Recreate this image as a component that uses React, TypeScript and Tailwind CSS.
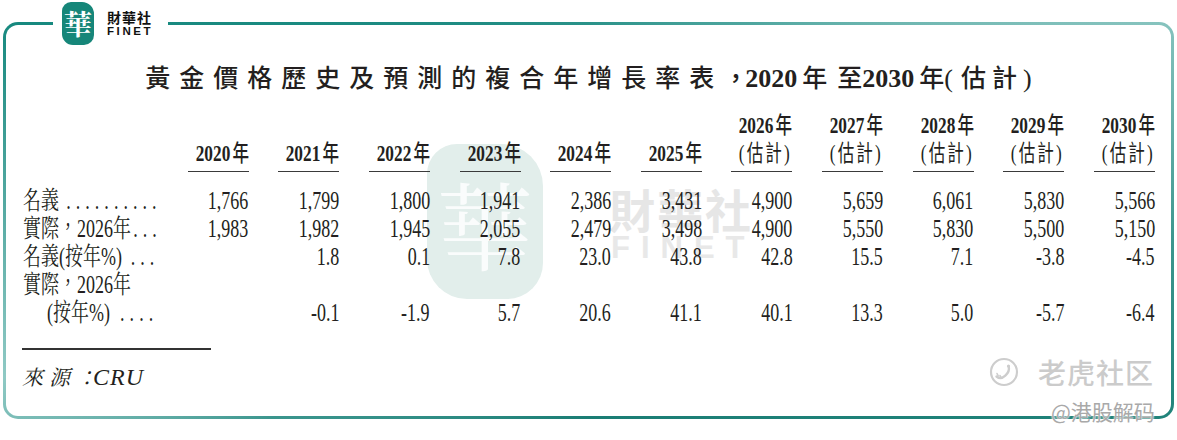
import React from 'react';

const SERIF = "font-['Liberation_Serif','Noto_Serif_CJK_TC','Noto_Sans_CJK_TC',serif]";
const years = ['2020', '2021', '2022', '2023', '2024', '2025', '2026', '2027', '2028', '2029', '2030'];

const rows: { label: React.ReactNode; indent?: boolean; vals: string[] }[] = [
  {
    label: (
      <>
        名義<span className="ml-[10px] tracking-[7px]">..........</span>
      </>
    ),
    vals: ['1,766', '1,799', '1,800', '1,941', '2,386', '3,431', '4,900', '5,659', '6,061', '5,830', '5,566'],
  },
  {
    label: (
      <>
        實際，2026年<span className="ml-[3px] tracking-[7px]">...</span>
      </>
    ),
    vals: ['1,983', '1,982', '1,945', '2,055', '2,479', '3,498', '4,900', '5,550', '5,830', '5,500', '5,150'],
  },
  {
    label: (
      <>
        名義(按年%)<span className="ml-[12px] tracking-[7px]">...</span>
      </>
    ),
    vals: ['', '1.8', '0.1', '7.8', '23.0', '43.8', '42.8', '15.5', '7.1', '-3.8', '-4.5'],
  },
  {
    label: <>實際，2026年</>,
    vals: ['', '', '', '', '', '', '', '', '', '', ''],
  },
  {
    label: (
      <>
        (按年%)<span className="ml-[14px] tracking-[7px]">....</span>
      </>
    ),
    indent: true,
    vals: ['', '-0.1', '-1.9', '5.7', '20.6', '41.1', '40.1', '13.3', '5.0', '-5.7', '-6.4'],
  },
];

function YearText({ y }: { y: string }) {
  return (
    <span className="inline-block scale-x-[0.72] origin-right whitespace-nowrap">
      <span className="font-['Liberation_Serif',serif] font-bold text-[24px]">{y}</span>
      <span className="ml-[3px] font-['Noto_Sans_CJK_TC',sans-serif] font-medium text-[23px]">年</span>
    </span>
  );
}

function EstText() {
  return (
    <span className="inline-block scale-x-[0.72] origin-right whitespace-nowrap tracking-[3px]">
      <span className="font-['Liberation_Serif',serif] text-[24px]">(</span>
      <span className="font-['Noto_Sans_CJK_TC',sans-serif] text-[23px]">估計</span>
      <span className="font-['Liberation_Serif',serif] text-[24px]">)</span>
    </span>
  );
}

function TigerLogo() {
  return (
    <svg width="30" height="30" viewBox="0 0 30 30" fill="none">
      <circle cx="15" cy="15" r="13" stroke="#cdcdcd" strokeWidth="2.2" />
      <path
        d="M7.5 19.5c2.5 2 6 1.8 8.8-0.8c2.6-2.4 4.2-6 3.4-9.2"
        stroke="#cdcdcd"
        strokeWidth="2.4"
        strokeLinecap="round"
      />
      <path d="M8 16.5l1.2 2.4M11 18.6l0.8 1.8" stroke="#cdcdcd" strokeWidth="1.6" strokeLinecap="round" />
      <circle cx="19.5" cy="9" r="1.6" fill="#cdcdcd" />
    </svg>
  );
}

export default function App() {
  return (
    <div className="relative w-[1177px] h-[440px] bg-white overflow-hidden text-[#231f20]">
      {/* frame */}
      <div className="mt-[22px] mx-[3px] h-[397px] rounded-[15px] p-[3px] bg-[conic-gradient(from_0deg,#2a9289_0deg,#4fa69f_40deg,#86c3be_71deg,#3d968e_92deg,#1f8279_110deg,#1a7d74_180deg,#3a958d_238deg,#8fc9c4_255deg,#5aaca5_270deg,#17897f_289deg,#1f8c83_330deg,#2a9289_360deg)]">
        <div className="relative h-full rounded-[12px] bg-white px-[16px]">
          {/* central watermark */}
          <div className="absolute z-0 left-[421px] top-[119px] w-[116px] h-[155px] rounded-[30px_42px_36px_40px] bg-[#e2eeeb] flex items-center justify-center">
            <span className="font-['Noto_Serif_CJK_TC','Noto_Sans_CJK_TC',serif] text-[96px] leading-none text-[#fafcfc]">
              華
            </span>
          </div>
          <div className="absolute z-0 left-[603px] top-[158px] flex flex-col items-start">
            <span className="font-['Noto_Sans_CJK_TC',sans-serif] font-bold text-[46px] leading-[50px] tracking-[2px] text-[#e6e6e6]">
              財華社
            </span>
            <span className="font-['Liberation_Sans',sans-serif] font-bold text-[31px] leading-[30px] tracking-[11px] text-[#e8e8e8] ml-[2px]">
              FINET
            </span>
          </div>

          <div className="relative z-10">
            {/* title */}
            <div className="pt-[34px] h-[68px] leading-[34px] text-center whitespace-nowrap text-[#231f20]">
              <span className="font-['Noto_Sans_CJK_TC',sans-serif] font-medium text-[25px] tracking-[9px]">
                黃金價格歷史及預測的複合年增長率表
              </span>
              <span className="font-['Noto_Sans_CJK_TC',sans-serif] font-medium text-[25px] mr-[-3px]">，</span>
              <span className="font-['Liberation_Serif',serif] font-bold text-[26px]">2020</span>
              <span className="ml-[5px] font-['Noto_Sans_CJK_TC',sans-serif] font-medium text-[25px]">年</span>
              <span className="ml-[10px] font-['Noto_Sans_CJK_TC',sans-serif] font-medium text-[25px]">至</span>
              <span className="font-['Liberation_Serif',serif] font-bold text-[26px]">2030</span>
              <span className="ml-[5px] font-['Noto_Sans_CJK_TC',sans-serif] font-medium text-[25px]">年</span>
              <span className="font-['Liberation_Serif',serif] text-[26px]">(</span>
              <span className="ml-[8px] font-['Noto_Sans_CJK_TC',sans-serif] font-medium text-[25px] tracking-[6px]">
                估計
              </span>
              <span className="font-['Liberation_Serif',serif] text-[26px]">)</span>
            </div>

            {/* header */}
            <div className="mt-[16px] grid grid-cols-[136px_repeat(11,minmax(0,1fr))] items-end">
              <div />
              {years.map((y, i) => {
                const est = i >= 6;
                return (
                  <div key={y} className="flex justify-end">
                    <div className="w-[61px] border-b-[1.5px] border-[#3a3a3a] pb-[6px] flex flex-col items-end">
                      <div className="h-[28px] leading-[28px]">
                        <YearText y={y} />
                      </div>
                      {est && (
                        <div className="h-[28px] leading-[28px]">
                          <EstText />
                        </div>
                      )}
                    </div>
                  </div>
                );
              })}
            </div>

            {/* body */}
            <div className={`mt-[15px] grid grid-cols-[136px_repeat(11,minmax(0,1fr))] text-[25px] ${SERIF}`}>
              {rows.map((r, ri) => (
                <React.Fragment key={ri}>
                  <div className={`h-[28px] leading-[28px] whitespace-nowrap ${r.indent ? 'pl-[25px]' : 'pl-[1px]'}`}>
                    <span className="inline-block scale-x-[0.72] origin-left">{r.label}</span>
                  </div>
                  {r.vals.map((v, vi) => (
                    <div key={vi} className="h-[28px] leading-[28px] text-right whitespace-nowrap">
                      {v && <span className="inline-block scale-x-[0.72] origin-right">{v}</span>}
                    </div>
                  ))}
                </React.Fragment>
              ))}
            </div>

            {/* source */}
            <div className="mt-[21px] h-[1.5px] w-[189px] bg-[#333]" />
            <div className={`mt-[13px] h-[28px] leading-[28px] italic whitespace-nowrap ${SERIF}`}>
              <span className="text-[21px] tracking-[6px]">來源</span>
              <span className="text-[21px]">：</span>
              <span className="ml-[-4px] text-[24px] tracking-[1px]">CRU</span>
            </div>
          </div>
        </div>
      </div>

      {/* top logo over the frame */}
      <div className="absolute left-[53px] top-0 h-[46px] w-[115px] bg-white flex items-center pl-[9px] gap-[13px]">
        <div className="w-[32px] h-[43px] rounded-[9px_12px_10px_11px] bg-[#168679] flex items-center justify-center">
          <span className="font-['Noto_Serif_CJK_TC','Noto_Sans_CJK_TC',serif] font-bold text-[28px] leading-none text-white">
            華
          </span>
        </div>
        <div className="flex flex-col leading-none text-[#111]">
          <span className="font-['Noto_Sans_CJK_TC',sans-serif] font-bold text-[14px] leading-[14px] tracking-[1px]">
            財華社
          </span>
          <span className="mt-[2px] font-['Liberation_Sans',sans-serif] font-bold text-[11.5px] leading-[11px] tracking-[2.6px]">
            FINET
          </span>
        </div>
      </div>

      {/* bottom-right watermarks */}
      <div className="absolute left-[989px] top-[356px] flex items-center gap-[19px]">
        <TigerLogo />
        <span className="font-['Noto_Sans_CJK_SC',sans-serif] font-medium text-[28px] leading-[32px] tracking-[1px] text-[#cbcbcb]">
          老虎社区
        </span>
      </div>
      <div className="absolute left-[1051px] top-[397px] font-['Noto_Sans_CJK_SC',sans-serif] text-[21px] leading-[28px] text-[#a9a9a9] [text-shadow:0_0_2px_#fff,0_0_2px_#fff]">
        @港股解码
      </div>
    </div>
  );
}
